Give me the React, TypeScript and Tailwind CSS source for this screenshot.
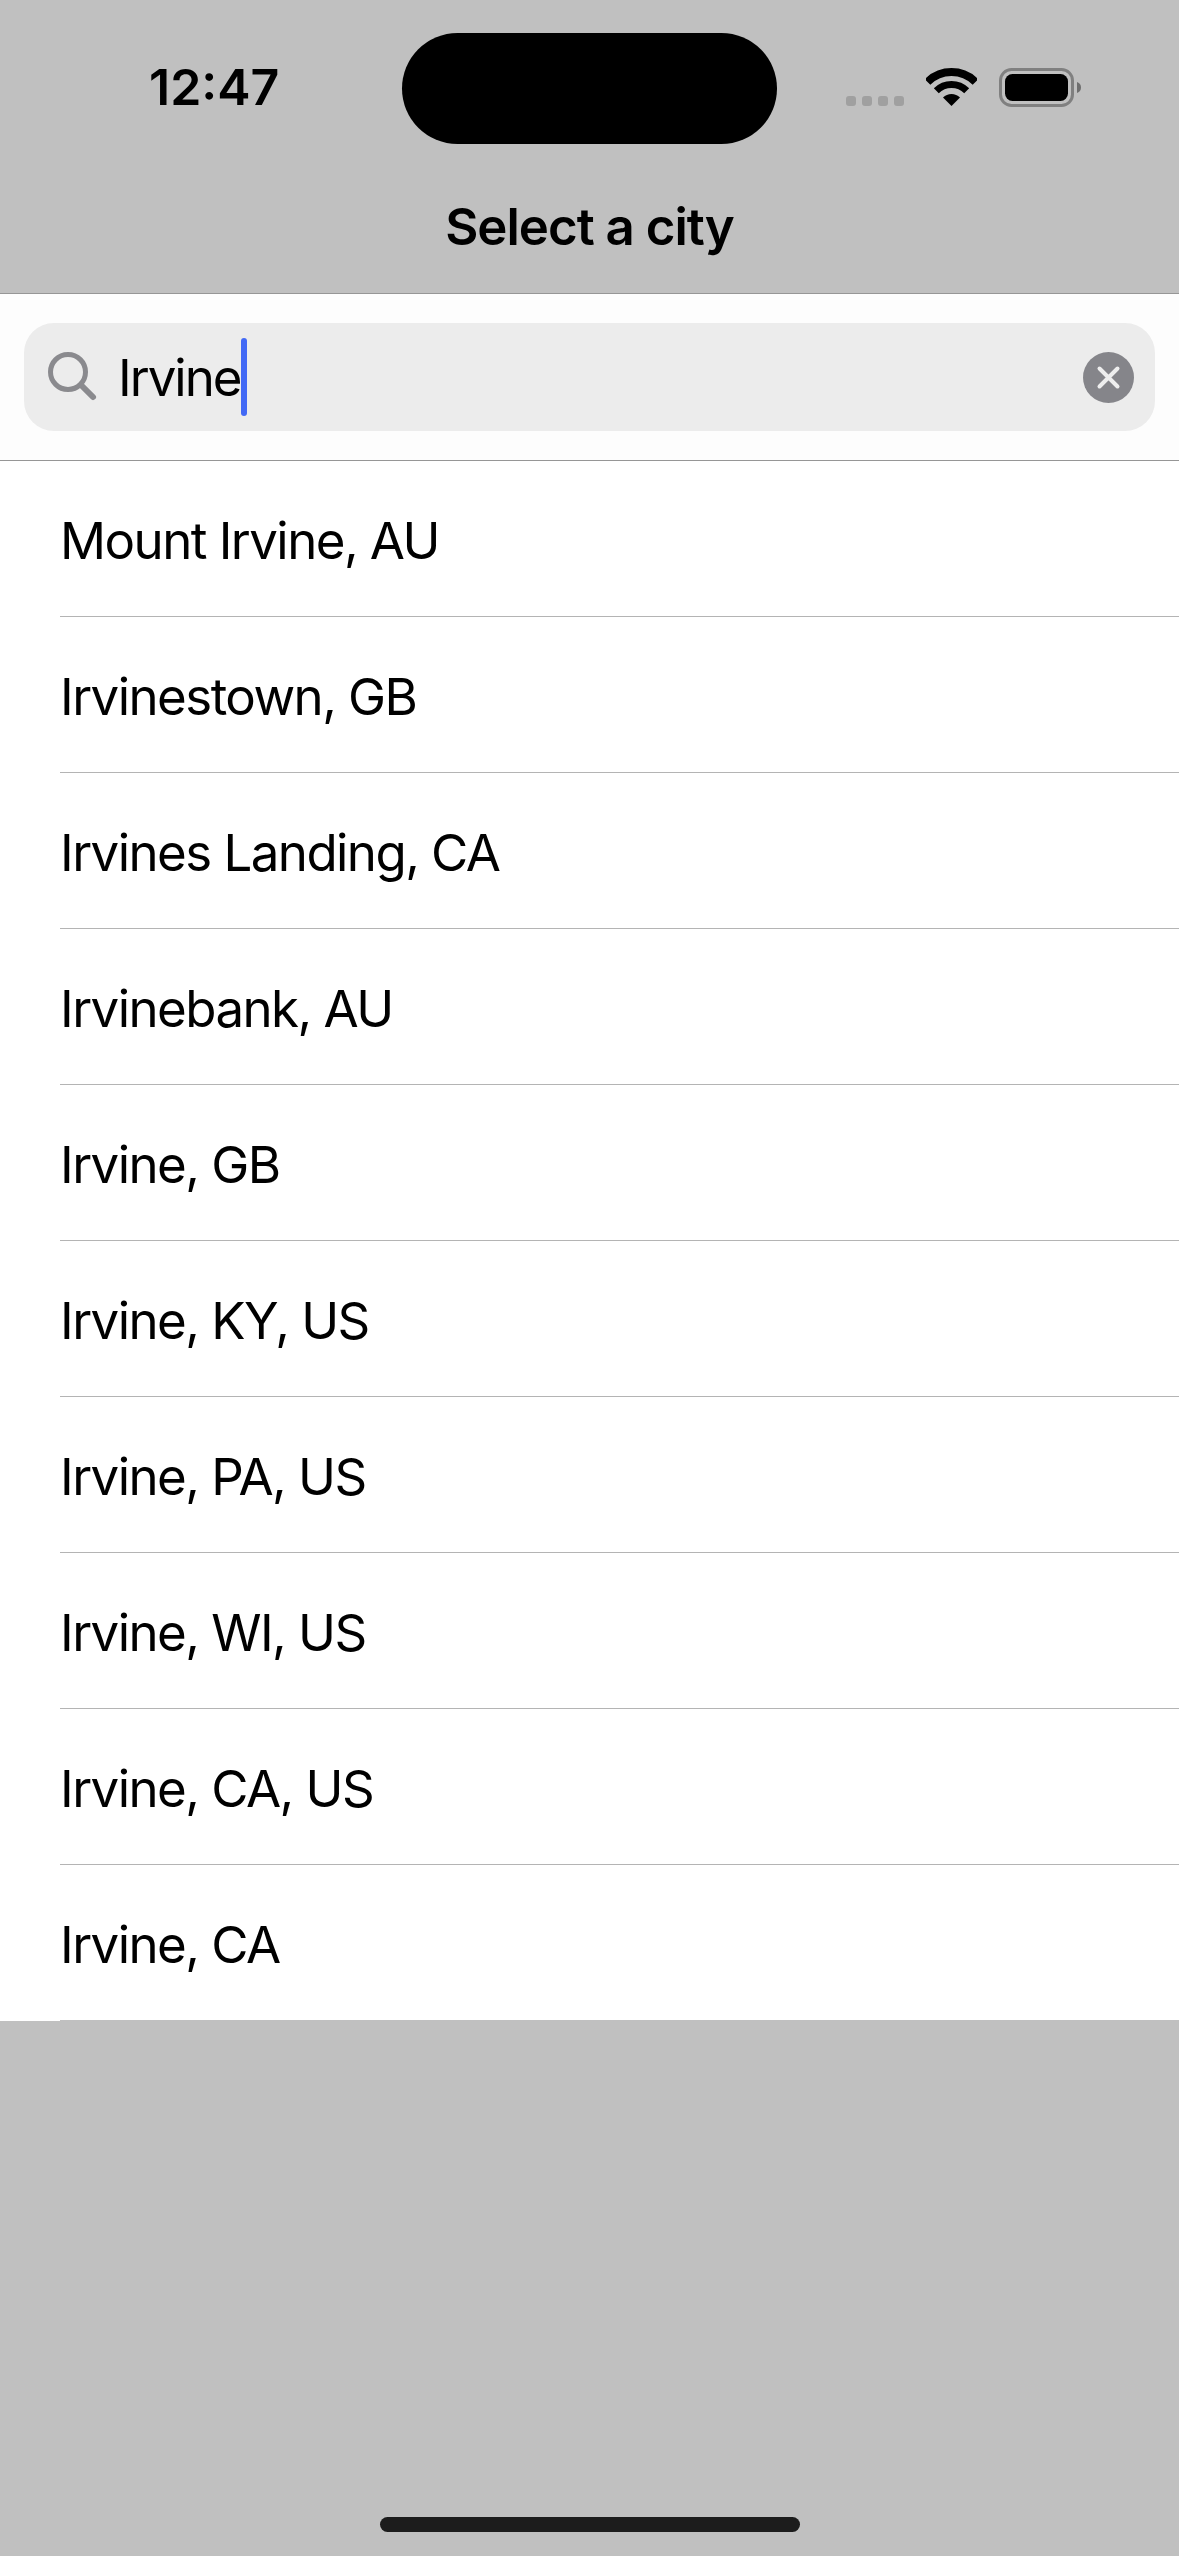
const cities = [
  "Mount Irvine, AU",
  "Irvinestown, GB",
  "Irvines Landing, CA",
  "Irvinebank, AU",
  "Irvine, GB",
  "Irvine, KY, US",
  "Irvine, PA, US",
  "Irvine, WI, US",
  "Irvine, CA, US",
  "Irvine, CA",
];

function Wifi() {
  return (
    <svg width="51" height="38" viewBox="0 0 51 38" className="block">
      <path d="M1.5 14A34 34 0 0 1 49.5 14" fill="none" stroke="#000" strokeWidth="8" />
      <path d="M10.3 22.8A21.5 21.5 0 0 1 40.7 22.8" fill="none" stroke="#000" strokeWidth="7" />
      <path d="M25.5 38L17 29.5A12 12 0 0 1 34 29.5Z" fill="#000" />
    </svg>
  );
}

function Battery() {
  return (
    <svg width="83" height="40" viewBox="0 0 83 40" className="block">
      <rect x="1.5" y="1.5" width="72" height="36" rx="11" fill="none" stroke="#808080" strokeWidth="3" />
      <rect x="6" y="6" width="63" height="27" rx="7.5" fill="#000" />
      <path d="M78 14C81 15 82 17 82 19.5C82 22 81 24 78 25Z" fill="#6f6f6f" />
    </svg>
  );
}

function SearchIcon() {
  return (
    <svg width="50" height="50" viewBox="0 0 50 50" className="block">
      <circle cx="20" cy="20" r="17.5" fill="none" stroke="#8a8a8e" strokeWidth="5" />
      <path d="M33 33L45 45" fill="none" stroke="#8a8a8e" strokeWidth="6" strokeLinecap="round" />
    </svg>
  );
}

function ClearIcon() {
  return (
    <svg width="51" height="51" viewBox="0 0 51 51" className="block">
      <circle cx="25.5" cy="25.5" r="25.5" fill="#85858a" />
      <path d="M16.5 16.5L34.5 34.5M34.5 16.5L16.5 34.5" fill="none" stroke="#eeeeee" strokeWidth="4" strokeLinecap="round" />
    </svg>
  );
}

export default function App() {
  return (
    <div className="w-[1179px] h-[2556px] bg-[#c0c0c0] flex flex-col text-black font-['Inter',sans-serif] overflow-hidden">
      <header className="h-[293px] shrink-0 flex flex-col">
        <div className="h-[197px] shrink-0 flex items-start">
          <div className="w-[402px] shrink-0 pt-[57px] pl-[149px] text-[50px] leading-[60px] font-semibold whitespace-nowrap">12:47</div>
          <div className="w-[375px] h-[111px] mt-[33px] rounded-[56px] bg-black shrink-0" />
          <div className="ml-[69px] mt-[96px] flex gap-[6px] shrink-0">
            <span className="w-[10px] h-[10px] rounded-[3px] bg-[#a0a0a0]" />
            <span className="w-[10px] h-[10px] rounded-[3px] bg-[#a0a0a0]" />
            <span className="w-[10px] h-[10px] rounded-[3px] bg-[#a0a0a0]" />
            <span className="w-[10px] h-[10px] rounded-[3px] bg-[#a0a0a0]" />
          </div>
          <div className="ml-[22px] mt-[68px] shrink-0"><Wifi /></div>
          <div className="ml-[22px] mt-[68px] shrink-0"><Battery /></div>
        </div>
        <h1 className="text-center text-[51px] leading-[60px] font-semibold tracking-[-1px]">Select a city</h1>
      </header>
      <div className="h-[168px] shrink-0 bg-[#fdfdfd] border-y border-[#969696] px-[24px] pt-[29px]">
        <div className="h-[108px] rounded-[30px] bg-[#ececec] flex items-center pl-[24px] pr-[21px]">
          <SearchIcon />
          <span className="ml-[20px] pt-[1px] text-[51px] leading-[60px] tracking-[-2px]">Irvine</span>
          <span className="w-[6px] h-[78px] rounded-[3px] bg-[#4269f5]" />
          <span className="ml-auto"><ClearIcon /></span>
        </div>
      </div>
      <ul className="bg-white">
        {cities.map((c, i) => (
          <li key={c} className="pl-[60px]">
            <div className={`h-[156px] pt-[5px] flex items-center text-[51px] tracking-[-1.55px] border-b ${i === cities.length - 1 ? "border-[#c0c0c0]" : "border-[#b4b4b4]"}`}>
              {c}
            </div>
          </li>
        ))}
      </ul>
      <div className="mt-auto mb-[24px] mx-auto w-[420px] h-[15px] rounded-full bg-[#1c1c1c]" />
    </div>
  );
}
